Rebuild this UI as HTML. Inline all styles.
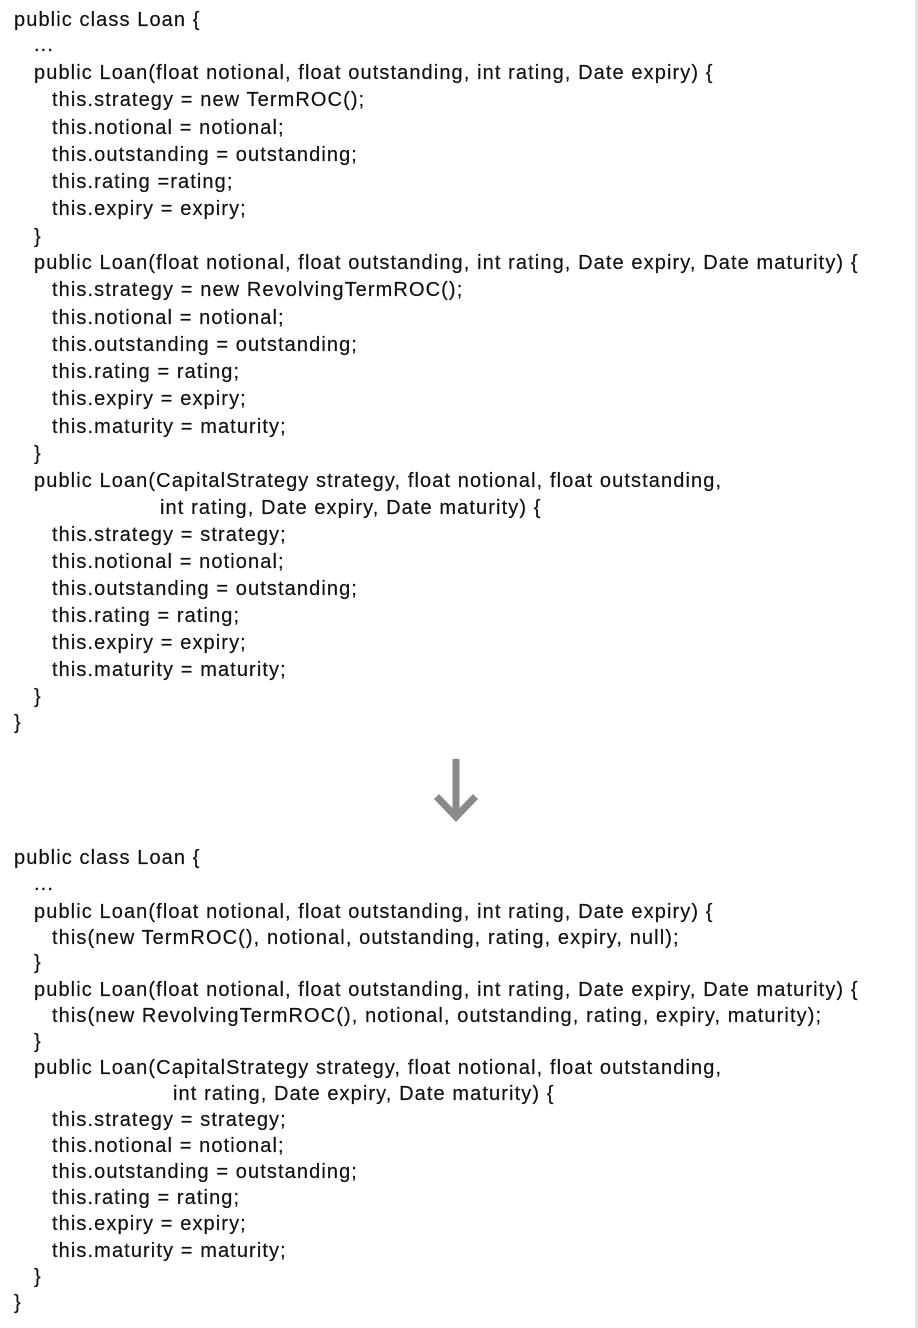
<!DOCTYPE html>
<html><head><meta charset="utf-8"><style>
html,body{margin:0;padding:0;background:#fff;}
body{width:918px;height:1328px;position:relative;overflow:hidden;font-family:"Liberation Sans",Arial,sans-serif;font-size:20px;letter-spacing:1.1px;color:#111;-webkit-text-stroke:0.2px #111;}
.l{position:absolute;white-space:pre;line-height:22px;}
.edge{position:absolute;right:0;top:0;width:3px;height:1328px;background:#e6e6e6;}
</style></head><body>
<div class="edge"></div>
<div class="l" style="left:14px;top:9px">public class Loan {</div>
<div class="l" style="left:34px;top:34px">...</div>
<div class="l" style="left:34px;top:62px">public Loan(float notional, float outstanding, int rating, Date expiry) {</div>
<div class="l" style="left:52px;top:89px">this.strategy = new TermROC();</div>
<div class="l" style="left:52px;top:117px">this.notional = notional;</div>
<div class="l" style="left:52px;top:144px">this.outstanding = outstanding;</div>
<div class="l" style="left:52px;top:171px">this.rating =rating;</div>
<div class="l" style="left:52px;top:198px">this.expiry = expiry;</div>
<div class="l" style="left:34px;top:226px">}</div>
<div class="l" style="left:34px;top:252px">public Loan(float notional, float outstanding, int rating, Date expiry, Date maturity) {</div>
<div class="l" style="left:52px;top:279px">this.strategy = new RevolvingTermROC();</div>
<div class="l" style="left:52px;top:307px">this.notional = notional;</div>
<div class="l" style="left:52px;top:334px">this.outstanding = outstanding;</div>
<div class="l" style="left:52px;top:361px">this.rating = rating;</div>
<div class="l" style="left:52px;top:388px">this.expiry = expiry;</div>
<div class="l" style="left:52px;top:416px">this.maturity = maturity;</div>
<div class="l" style="left:34px;top:443px">}</div>
<div class="l" style="left:34px;top:470px">public Loan(CapitalStrategy strategy, float notional, float outstanding,</div>
<div class="l" style="left:160px;top:497px">int rating, Date expiry, Date maturity) {</div>
<div class="l" style="left:52px;top:524px">this.strategy = strategy;</div>
<div class="l" style="left:52px;top:551px">this.notional = notional;</div>
<div class="l" style="left:52px;top:578px">this.outstanding = outstanding;</div>
<div class="l" style="left:52px;top:605px">this.rating = rating;</div>
<div class="l" style="left:52px;top:632px">this.expiry = expiry;</div>
<div class="l" style="left:52px;top:659px">this.maturity = maturity;</div>
<div class="l" style="left:34px;top:686px">}</div>
<div class="l" style="left:14px;top:712px">}</div>

<svg style="position:absolute;left:428px;top:756px" width="56" height="70" viewBox="0 0 56 70">
<path d="M24.5 3 H31.5 V52 L45 38 L50 43 L28 66 L6 43 L11 38 L24.5 52 Z" fill="#8a8a8a"/>
</svg>

<div class="l" style="left:14px;top:847px">public class Loan {</div>
<div class="l" style="left:34px;top:873px">...</div>
<div class="l" style="left:34px;top:901px">public Loan(float notional, float outstanding, int rating, Date expiry) {</div>
<div class="l" style="left:52px;top:927px">this(new TermROC(), notional, outstanding, rating, expiry, null);</div>
<div class="l" style="left:34px;top:952px">}</div>
<div class="l" style="left:34px;top:979px">public Loan(float notional, float outstanding, int rating, Date expiry, Date maturity) {</div>
<div class="l" style="left:52px;top:1005px">this(new RevolvingTermROC(), notional, outstanding, rating, expiry, maturity);</div>
<div class="l" style="left:34px;top:1031px">}</div>
<div class="l" style="left:34px;top:1057px">public Loan(CapitalStrategy strategy, float notional, float outstanding,</div>
<div class="l" style="left:173px;top:1083px">int rating, Date expiry, Date maturity) {</div>
<div class="l" style="left:52px;top:1109px">this.strategy = strategy;</div>
<div class="l" style="left:52px;top:1135px">this.notional = notional;</div>
<div class="l" style="left:52px;top:1161px">this.outstanding = outstanding;</div>
<div class="l" style="left:52px;top:1187px">this.rating = rating;</div>
<div class="l" style="left:52px;top:1213px">this.expiry = expiry;</div>
<div class="l" style="left:52px;top:1240px">this.maturity = maturity;</div>
<div class="l" style="left:34px;top:1266px">}</div>
<div class="l" style="left:14px;top:1292px">}</div>
</body></html>
